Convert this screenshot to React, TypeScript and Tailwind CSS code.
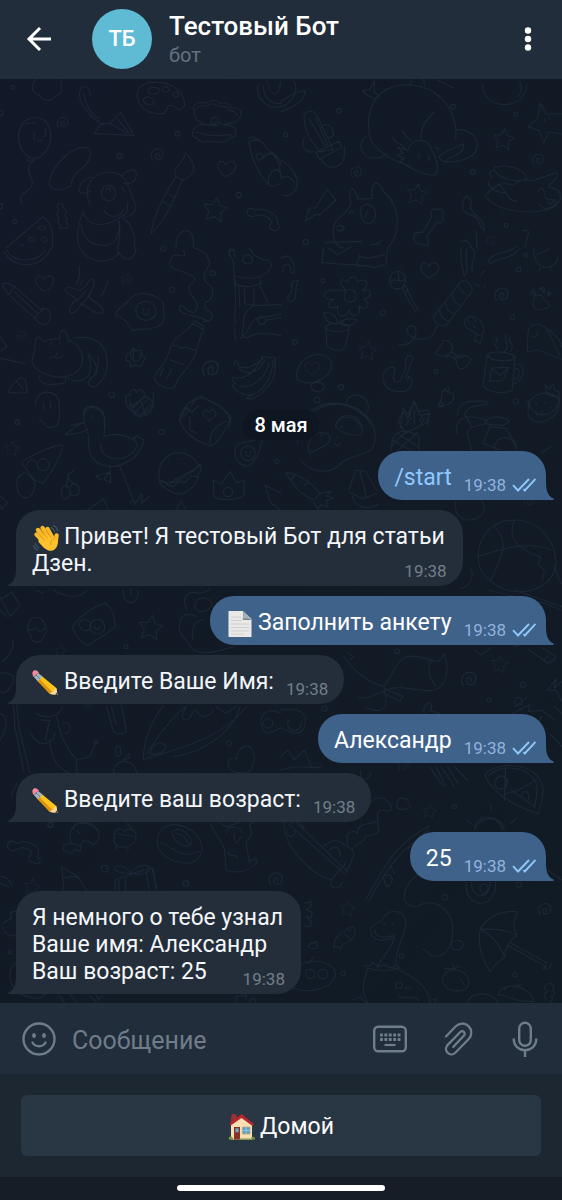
import React from "react";

type Message = {
  id: number;
  from: "user" | "bot";
  lines: string[];
  emoji?: "wave" | "page" | "pencil";
  link?: boolean;
};

const messages: Message[] = [
  { id: 1, from: "user", lines: ["/start"], link: true },
  { id: 2, from: "bot", lines: ["Привет! Я тестовый Бот для статьи", "Дзен."], emoji: "wave" },
  { id: 3, from: "user", lines: ["Заполнить анкету"], emoji: "page" },
  { id: 4, from: "bot", lines: ["Введите Ваше Имя:"], emoji: "pencil" },
  { id: 5, from: "user", lines: ["Александр"] },
  { id: 6, from: "bot", lines: ["Введите ваш возраст:"], emoji: "pencil" },
  { id: 7, from: "user", lines: ["25"] },
  { id: 8, from: "bot", lines: ["Я немного о тебе узнал", "Ваше имя: Александр", "Ваш возраст: 25"] },
];

const emojiClass = "-my-1 mr-1 inline-block size-7 shrink-0 align-middle";

function Wave() {
  return (
    <svg viewBox="0 0 28 28" className={emojiClass} aria-hidden="true">
      <g stroke="#f6b72b" strokeLinecap="round" strokeWidth="4.4">
        <path d="M4.5 10.5 13 19" />
        <path d="M6 6 15 16" />
        <path d="M10.5 4 18 14" />
        <path d="M15.5 5 20 13" />
        <path d="M24.6 11.5 23.5 19" />
      </g>
      <path d="M6.5 13.5 18.5 9 22 15 25.8 16c.4 5-1.300 9.400-5.300 10.500-4.500 1.200-8-1.500-14-8.500z" fill="#fbc02d" />
      <path d="m7.500 11 5 5M9.500 7.500l6 6.500M14 6l5 7.500" stroke="#d98c12" strokeWidth=".9" fill="none" strokeLinecap="round" />
      <path d="M22.500 15c-3 .5-4.500 3-3.500 6" stroke="#df9816" strokeWidth="1" fill="none" />
      <path d="M19 3.500c2 .8 3.200 2.200 3.600 4.300M21.500 1.500c2.400 1 3.800 3 4.200 5.500M3.200 19.500c.4 2 1.600 3.300 3.500 4M1.500 21.500c.7 2.300 2 3.700 4.200 4.600" stroke="#45586a" strokeWidth="1.100" fill="none" strokeLinecap="round" />
    </svg>
  );
}

function Page() {
  return (
    <svg viewBox="0 0 28 28" className={emojiClass} aria-hidden="true">
      <path d="M2.500 1H17l8.500 8v18h-23z" fill="#e9e9e7" />
      <path d="M5 7h10M5 10.500h11M5 14h18M5 17.500h18M5 21h18M5 24h13" stroke="#cfd0d0" strokeWidth="1" />
      <path d="M17 1v9h8.500z" fill="#77818a" />
      <path d="M17 1c.8 3 .5 5-1 8 3-1 6-.8 9.500.8z" fill="#a9b0b3" />
    </svg>
  );
}

function Pencil() {
  return (
    <svg viewBox="0 0 28 28" className={emojiClass} aria-hidden="true">
      <path d="M8.800 6.200 24.300 19 25.500 26 18 25 4.200 10.600z" fill="#fbc31c" />
      <path d="m4.200 10.600 2-1.800L20.500 23l-2.500 2z" fill="#e2930d" />
      <path d="m18 25 2-2.200 1.500-.2 1-2.200 1.800-1.400L25.500 26z" fill="#f6d7a5" />
      <path d="m23 25.600 2-2 .5 2.400z" fill="#343434" />
      <path d="m6.200 3.900 4.300 3.700-4.600 4.700L1.800 8z" fill="#9fb4c0" />
      <path d="M1.900 8.100C-.5 5.500.2 2.500 2 1.600c1.700-.9 4 .2 5 2.500-1.800.5-3.800 2-5.100 4z" fill="#f48a9c" />
      <path d="m4 6 4.300 4.200" stroke="#70838e" strokeWidth="1" />
    </svg>
  );
}

function House() {
  return (
    <svg viewBox="0 0 28 28" className="mr-1 size-7 shrink-0" aria-hidden="true">
      <path d="M3 3.500 4.500 1h3L9 3.500 8 9l-5 2z" fill="#9c2f35" />
      <path d="M3 11 14 2l10 9v15.500H3z" fill="#f8dfb3" />
      <path d="M13.500 1 1.500 10.500l1.200 2L13.500 5l11 8 1.500-2z" fill="#b5262c" />
      <path d="M6 14h6v12.500H6z" fill="#873229" />
      <path d="M7.300 15.300h3.400v4H7.300z" fill="#6fa6bd" />
      <path d="M14.500 14h7.500v7h-7.500z" fill="#58a2cb" stroke="#c4a06f" strokeWidth=".8" />
      <path d="M18.200 14v7M14.500 17.500H22" stroke="#a4d7ec" strokeWidth=".7" />
      <path d="M1 26.500c-1-3 2-4 4-1.500v1.500zM22.500 26.500c0-3 3.500-4 4.500-1v1zM11.500 26.500h12v-1h-12z" fill="#7c9b3d" />
    </svg>
  );
}

function Emoji({ name }: { name: NonNullable<Message["emoji"]> }) {
  if (name === "wave") return <Wave />;
  if (name === "page") return <Page />;
  return <Pencil />;
}

function Ticks() {
  return (
    <svg viewBox="0 0 24 14" className="h-[14px] w-6 shrink-0" fill="none" stroke="#8fc7f8" strokeWidth="1.900" aria-label="Прочитано">
      <path d="m1 7.200 5 5.300L17 1M11.500 11l1.300 1.500L23.500 1" />
    </svg>
  );
}

function Bubble({ message }: { message: Message }) {
  const own = message.from === "user";
  const last = message.lines.length - 1;
  return (
    <li className={own ? "flex justify-end" : "flex justify-start"}>
      <div
        className={
          own
            ? "relative rounded-l-3xl rounded-tr-3xl bg-[#3f628b] pt-[13px] pr-[10px] pb-[9px] pl-4 text-white"
            : "relative rounded-t-3xl rounded-br-3xl bg-[#232e3a] px-4 pt-[13px] pb-[9px] text-[#f4f7fa]"
        }
      >
        {message.lines.map((line, i) => (
          <div key={line} className={i === last ? "flex items-end justify-between gap-3" : "pr-[2px]"}>
            <p className={message.link ? "text-[#8fc9ff]" : ""}>
              {i === 0 && message.emoji && <Emoji name={message.emoji} />}
              {line}
            </p>
            {i === last && (
              <span className={own ? "-mb-[3px] flex items-center gap-[6px] text-[#8fb4dc]" : "-mb-[3px] flex items-center text-[#727e89]"}>
                <time className="text-[17px] leading-[18px]">19:38</time>
                {own && <Ticks />}
              </span>
            )}
          </div>
        ))}
        {own ? (
          <svg viewBox="0 0 9 18" className="absolute bottom-0 left-full -ml-px h-[18px] w-[9px]" fill="#3f628b" aria-hidden="true">
            <path d="M0 0h1c0 9 2 14 7.500 16.600.6.400.4 1.400-.5 1.400H0z" />
          </svg>
        ) : (
          <svg viewBox="0 0 9 18" className="absolute right-full bottom-0 -mr-px h-[18px] w-[9px]" fill="#232e3a" aria-hidden="true">
            <path d="M9 0H8C8 9 6 14 .5 16.600c-.6.400-.4 1.400.5 1.400h8z" />
          </svg>
        )}
      </div>
    </li>
  );
}

const star = "M0-36 11-13 36-10 18 8 23 34 0 22-23 34-18 8-36-10-11-13z";
const heart = "M0 24C-20 12-30-4-22-16-14-28-2-20 0-10 6-24 24-26 29-12 32 2 18 16 0 24z";
const swirl = "M-14 14C-26-4-12-22 6-19 22-14 20 10 4 12-8 12-10-3 0-6 7-6 8 2 3 4";

/* Each sheet covers a 281px-wide tile, drawn at three times its size. */
const sheets: { x: number; y: number; paths: string[]; stars?: number[][]; hearts?: number[][]; swirls?: number[][]; dots?: number[][] }[] = [
  {
    x: 0, y: 78,
    paths: [
      "M103 10C92 25 96 48 118 50c10 22 40 22 48 4 20-2 22-24 14-34 8-8 6-20 0-24M118-4c-14 4-10 12-15 14",
      "M270 52C272 20 240 18 238 45c2 36 30 70 60 88M252 50c4 32 22 58 44 72",
      "M283 167 303 137 330 136 362 103 402 172zM344 112 388 166M330 136l52 30M303 137l10 6",
      "M488 106C440 112 400 76 414 36 430 6 500 4 530 34c24 20 32 50 14 60-12 6-22-16-36-12-12 4-4 22-20 24z",
      "M444 38c0-12 32-14 34-2 0 14-32 18-34 2zM486 33c4-12 22-8 22 2-2 10-22 8-22-2zM518 48c4-10 18-6 18 2 0 8-16 8-18-2zM430 66c6-16 28-10 32 6 0 14-28 10-32-6z",
      "M582 100C572 82 600 66 618 76c16-14 38-8 42 0 22-6 30 4 34 14 26-4 36 12 24 30-10 20-34 14-48 20-10-4-18-18-26 0-26 8-60-8-62-40zM586 96c12-18 26-12 36-12 12-12 28-4 36 2 14-2 26 0 32 12 14 0 22 8 20 16",
      "M634 124a13 13 0 1 1 22 14c-10 10-28 0-22-14zM620 140c-24-8-50 14-40 36 16 4 16 18 34 16 22-6 34 4 50 0 22 2 20-16 40-16 10-20 0-34-32-36M588 164c20-4 28 14 44 6 20 8 40 0 62 0",
      "M60 150c14-40 76-44 88 0 16 42-12 88-46 92-34-4-56-50-42-92zM90 236l-10 12 22 4-4-12M92 250c-20 40 18 50 0 80-20 16-38 24-28 46M102 164v20M136 152c2 14 0 20-4 24M112 184c2 6 8 6 12 2M76 138c10-6 20 2 30-6",
      "M262 210c22 14 4 48-24 68-20 16-20 24-26 46-20 12-58 20-64-6 0-50 72-122 114-108z",
      "M270 380C244 320 286 276 340 284c50 8 44 60 66 92 8 26-18 48-42 34M370 412c18-10 10-26 14-42M366 294c4-8 16-18 22-14 10-14 24 0 20 16-2 18-26 26-36 20M280 300c-20-10-42 18-42 40 10 10 24 4 34-2M305 340c6-30 44-20 42 8-6 36-50 20-42-8zM318 338c4-14 14-10 14 2M366 326l8 16M312 398c22 28 48 18 60-4",
      "M248 400c20 60 90 40 114 16 26 10 46 50 42 95M246 410c-12 30-18 64-8 100M242 440c10 44 28 60 68 62 32 0 50-20 48-74M356 430c6 20 4 60-4 80",
      "M174 380c8-8 20 0 14 8 14 8 12 20 6 26 8 4 10 14 4 18 10 6 6 20-4 18-8 4-16 0-12-6-8-4-10-16-4-22-10-8-8-20-2-26-4-4-6-12-2-16z",
      "M454 466c2-40 40-120 74-170l20 10c-28 60-50 120-94 160zM500 345l26 14M490 372l24 12M528 296c-16-30 28-40 28-72 34 34 36 66-8 82z",
      "M18 510 128 416c30 20 34 60 28 95M112 448c10-8 22-4 26 4-8 8-20 4-26-4zM88 480c8-6 18 0 16 8-8 8-20 0-16-8zM124 480c8-8 18 0 18 8-10 10-20 0-18-8zM60 500l10 2",
      "M746 184c14-18 40 6 60 32 30 20 34 56 37 80M746 190c8 50 30 100 60 130 14 10 20 2 37-4M752 190c20-10 30 0 38 6M790 240c20-30 46-6 53 20M770 230a10 10 0 1 0 16 0c-4-6-14-6-16 0M806 320c-6-40 30-60 37-30",
      "M742 400c2-14 20-8 24-4 40-8 72 20 66 40 16 10-4 28-14 20-14-4-10-16-2-20-4-24-40-28-52-22-14 4-26-4-22-14z",
      "M528 510c-4-60 50-70 52-20v20M775 20c-10 40 30 80 70 64M790 24c0 40 30 60 55 50M800 10c20 60 40 40 42 0",
    ],
    stars: [[646, 394, 1]], hearts: [[678, 272, 1]], swirls: [[188, 136, .9], [472, 232, 1]],
    dots: [[38, 28, 6], [533, 167, 7], [358, 234, 8], [716, 351, 8], [44, 430, 6], [0, 384, 8], [2, 106, 7]],
  },
  {
    x: 281, y: 78,
    paths: [
      "M270 190C250 110 270 30 370 20c100 0 150 70 155 135v30M262 172c-34 14-30 70 20 68 20 2 24-6 34-12M270 190c30 40 70 60 120 76M420 188c-4-40 14-60 40-86M525 155c60-4 80 50 50 76-30 22-90 30-102 6 20-20 40-22 74-40 4 22-14 36-50 46",
      "M380 218c10-40 60-40 70-6 14 24 30 64 10 80-30 0-56-16-76-24l-28-20 16-6-24-10 18-8-16-16 24 6zM414 226v14M444 232v16M336 176c10 30 20 10 36 36M362 160c14 8 16 20 30 30M460 210c14-6 14 6 8 12",
      "M290 60c-12 4-32-6-46-22 10-2 16-4 22-2l14-28M280 10v30l14 16M384 22l14-20M432 20l-6-18M470 6l48 24",
      "M0 100c50-14 70-40 74-62-30-4-60 30-74 30M40 10c14 30-4 60-36 76M605 20c0 80 130 80 132 0M716 10c10 20 4 36-8 46",
      "M70 110c16-20 36-10 46 20l40 84-40 8C90 190 66 150 70 110zM84 122l50 84M104 120l36 80M120 150c0-14 30-14 34 6 8 14 2 24-12 22M70 180c-16 30 16 50 30 40M104 224l70-34 8 18-66 36zM120 244c20 40 70 24 70-10v-28",
      "M0 246c34 20 50 50 48 74-4 30-30 38-46 30M0 300c20-10 34 0 40 14M72 430l14-40 18 0 34-56 26 32-48 46-10-4z",
      "M210 374c-14-60 14-50 20-10 30-4 40 0 44-4C266 300 300 310 306 340c60 50 50 130 14 170M210 376c-10 36-50 40-54 80 0 30 10 50 30 54M238 400c0-30 46-28 46 8 0 40-44 40-46-8zM260 396l-8 24M206 406c4-14 12-8 14 2M168 446c10-6 20-4 22 6-6 6-16 10-22 4M132 494l110-4M270 500c20 0 30-6 34-14",
      "M402 466c10-6 20 0 24-4l26-46c-8-20 8-30 18-20 12-8 24 6 12 20 14 10-4 24-14 16l-32 46c16 16-4 34-16 20-18 4-26-20-18-32z",
      "M556 352l16 16c-20 40 46 50 38 90-20-10-6-40-44-48-30-10-24-40-10-58z",
      "M640 270c30-14 90 0 98 30-20 20-100 0-98-30zM634 300l-10-14 10-10M622 310c-4 10 20 36 50 34M612 352c40-40 60-40 84-30 10-10 30-20 60-14l70-24c14 12-20 32-24 42 14 10 40 0 36 40-20 40-90 40-150 30-40-10-60-20-76-44zM650 320c30 10 20 50 60 50M770 340c10-20 24 0 24 20 10 10 30 0 34 10-10 20-40 30-50 10M800 370l8 8 10-8",
      "M778 76l16 32 49 0M778 76l-8 46-28 24 32 12 14 38 14-34 41 6M790 120v10M806 116v10M584 460c10 30-4 50 8 50M725 458c10 0 16-4 18 6l-12 46M540 490c20-10 30 10 30 20",
    ],
    stars: [[668, 183, .85], [408, 348, .85]], swirls: [[226, 284, .9], [772, 246, .9], [632, 490, .8]],
    dots: [[174, 98, 7], [14, 170, 6], [516, 86, 7], [704, 108, 6], [575, 282, 7], [676, 442, 6], [74, 492, 8]],
  },
  {
    x: 0, y: 248,
    paths: [
      "M12 10c30 60 120 50 140-10M20 6c20 40 90 40 116 0M240 0c30 50 90 50 118 14 24 40 50 10 50-14M354 0v20",
      "M6 112c10-12 20-6 40 6l76 66c20-12 30 10 30 26-8 26-34 24-44 4L26 140zM26 140l18-26M106 212c4-20 20-20 26-30M44 132l70 66",
      "M196 130c-4-14 14-16 40-2 20 0 30-40 44-34 8 16-4 36-16 50 20 20 50 34 46 48-16 16-50-18-66-26-10 20-20 34-34 28-8-14 10-30 18-40zM238 56v30l-10 24M325 100l-20 44M240 110l8-14M230 160l30-34M244 170l30-34",
      "M352 204c-20-10 20-30 36-48 30-40 90-10 102 10 0 30 10 60-14 68-30 16-50 4-76 14-14-6-14-34-48-44zM408 190c-4-40 60-40 60 0 0 36-60 36-60 0zM430 182v6M446 182v6M428 196c8 6 12 6 18 0",
      "M510 50c0-60 60 0 40-44M512 56c30 20 90 20 66 50-40 20 40 60 6 86-20 10-36-34-46-14 0 30 60 20 80 40M580 0c40 10 40 20 50 44-10 30-30 40-10 60 30 20 20 50-4 60-10 30 30 20 18 50-14 10-20 4-24 8",
      "M578 226l6-8 28 16-2 14c-20 34-10 60-40 100-20 30-40 40-44 68-20 16-64-10-64-30 20-30 34-40 44-70 10-50 40-50 72-90zM578 226l30 18M520 294c10-10 20 16 30 4 14-6 20 14 38 6M508 336c20 0 24 16 44 12M480 384l10-22M500 394l14-30",
      "M106 300c-4-40 10-40 26-18 14-8 30-10 46-10 2-34 20-34 26 4 30 10 50 40 42 70-20 70-150 40-150-10zM150 330l16-4 6-14M166 326c10 10 20 0 24-4M150 290l6-8M180 290v-6M224 270c60-10 100 20 98 80 0 40-34 70-48 66-20-10 0-30 14-36 10-30-14-50-24-64M120 382c-8 30 30 30 70 24 10-2 8-14 4-22M204 380c-4 20 30 24 50 12 20-10 20-40 12-70M284 376c10-20 14-28 10-50",
      "M380 320l14-8 4-14 12 10 14-2 2 14 10 10-8 14-6 12-16-6-14 6-2-14-12-6zM392 318c0 30 30 30 30-2M400 310v26M400 308h16",
      "M704 350c-6-20 10-10 14 4 30 20 60-20 70-20l-2-8 40 4v26c0 60-70 110-88 94l20-10c-30 8-60-20-60-28l10-6c-14-6-14-20-8-18 30 8 60-6 88-60M716 360c20 20 60 20 78-24M720 414c40 10 80-30 88-70M758 440c30-10 60-50 62-104",
      "M706 230c-4-50 6-90-4-140 0-40 0-60-16-70l6-20M704 240l2 38M684 12l16-8 6 22M706 84c30 10 50 10 74 2 40-20 40-40 24-50-30 0-50-20-56-36M728 36c0-20 30-20 30-2s-30 18-30 2zM704 90l4 20c30 10 50 6 76-4l-4-14M716 116l4 60M734 124v44l28 2v-50M780 114l24 50M843 170l-60 2c-20-4-40 10-50 30l-6 60 10 8c20-10 40-20 106-8M720 272c30-20 20-40 50-60l73-14M776 210a12 12 0 1 0 20 0c-4-8-16-8-20 0M800 216l43-8",
      "M0 332c30 0 30 10 76 14M0 266l20 30-18 12M26 432c4-20 20-30 34-44l16 8 6 36c-10 6-40 2-56 0zM50 400l20 24M106 470c0-50 70-50 72 0 4 50 0 70-30 68-20-4-14-20-30-24M130 464v20M152 462v20M250 500c0-40 60-30 64 10v30M214 532l40-10",
      "M380 460c-10-20 4-20 10-16-4-20 16-26 20-10 14-20 30 0 20 14M388 470c10 10 20-10 50-24 30 14 24 30 10 50-20 14-40 10-46 0-8-14-14-20-14-26zM400 480l26-28M404 496l40-44M420 504l30-34",
      "M540 520c-4-30 30-60 60-76 20 8 20 14 28 14 30 10 50 30 64 60l-6 22M550 510l40-60M556 480l20 12 20-20",
    ],
    hearts: [[132, 106, 1], [628, 502, .7]], swirls: [[64, 264, .7], [382, 96, .8], [632, 364, 1.300]],
    stars: [],
    dots: [[516, 125, 8], [638, 75, 8], [335, 440, 8], [490, 2, 8], [52, 522, 7]],
  },
  {
    x: 281, y: 248,
    paths: [
      "M128 0l-6 44c40 4 120 6 160 14 30-4 40-14 34-24l4-34M236 20c0 20-16 20-2 36M236 26c30 8 40 0 74-6M142 0l28 20 40-24",
      "M0 30c14-10 40-10 40 44-10 6-16-4-10-10-2-20-30-20-24 8M22 156c-8-20 14-10 10-40-4-14 10-20 20-18-10 14-6 40-10 54-8 10-16 10-20 4z",
      "M190 146a18 18 0 1 1 34 4c-8 20-36 14-34-4zM196 128c-30-30-16-40 4-26 2-20 30-18 30 0 24-14 40 4 14 26 30-10 32 20 4 26 30 14 4 40-14 20 10 30-22 40-30 12-10 30-40 20-34-10-30 10-40-6-10-22-40 4-40-28-4-28zM130 192c30 4 40 20 40 36-30 0-40-14-40-36zM176 226c10-14 34-16 52-10-10 20-40 20-52 10zM134 240c0-20 70-20 72 0-10 14-60 14-72 0zM134 242l4 50c20 20 50 20 56 0l12-54",
      "M326 100c0-40 50-40 48 0-6 30-46 30-48 0zM330 100c14-14 30 10 44-8M350 74c8 10-4 20 10 26M362 120l10-6 10 12-8 8zM372 138l32 54M382 132l30 56",
      "M458 206l80-104c14-10 40 10 34 30l-76 100c-10 6-40-4-38-26zM476 184c0 20 10 30 26 36M494 160c0 20 10 34 28 38M514 134c0 20 10 34 26 40M532 108c4 20 14 30 34 34M466 236c-10 50-60 40-80 26-20-20 0-34 14-26 14 20-4 60-46 54",
      "M550 84l-10-44V0M550 82c20-10-4-60 8-80M574 0c20 20-10 50 0 70M626 46c-16-30 60-30 80-50M628 46c30-20 60-10 90-44M600 80l10-10M586 108l10 8M612 112v6",
      "M550 230c0-40 60-30 58 20l-10 14-40-24zM584 260l-4 20 8-2 10 10 8-26M560 216l6 8M580 212l4 10M576 232l6 6",
      "M760 0c-4 14 0 50 30 58 20 2 40-10 40-30M776 58v10M808 58v8M766 20l40-18M756 160c4-30 30-20 34-4 20 10 20 26 0 26-20 10-36 0-34-22zM750 136l8-10 6 16zM776 122l14-4v16zM800 132l10 4-8 10z",
      "M620 320c10-14 70-8 82 6-10 20-80 14-82-6zM618 322l-12 92c20 24 70 24 88 12l8-96M704 348c40 0 20 60-10 60M704 362c16-4 14 30-4 32M626 400l6-40 50-2-16 40zM632 362l24 20 26-20M650 300c-20-10 10-20-6-30M670 310c20-20 0-30 4-50M688 310c20-20-14-30 0-40",
      "M740 310c0-60-4-80 30-82 40 14 70 50 73 70M740 312l30-6 73 28M752 262c6 14 20 0 18-16M796 240l40 80",
      "M464 316c14-20 20-30 26-40 20 2 30 20 22 34l20 20c20-10 30-10 38 6-10 20-20 30-36 26-8-10-8-20-10-30l-24-10c-10 4-30 2-36-6zM496 328l20-24M520 336l16-16",
      "M306 396c-4-40 40-50 36-24-10 20 0 40 16 26 10-20 24-50 14-60 10-30 30-10 22 0-10 10-6 20-16 40-10 20 10 20 4 8 20 0 14 30-8 44-40 4-60-6-68-34z",
      "M46 380c6-60 80-80 104-40 10 40-40 70-80 64-16-6-26-10-24-24zM90 414c4-16 40-14 40 4-10 20-40 14-40-4z",
      "M472 472c20-30 0-30 20-50l8 12 16 2c10 30-20 40-44 36zM500 434l4-16M358 540l8-60 14 20 18-40 14 30 32-4-4 50M376 530l14-20M400 530v-40M420 530l10-20",
      "M530 500c0-50 50-40 88-40 14 20-60 0-66 40l20 34M616 518c20-20 60-10 70 4l-20 10-50-4zM742 480c0-50 80-60 92-20 4 40-40 70-74 60-20-10-20-30-18-40zM800 440l-8-28 14 10 10-14 6 20 16 4-10 16zM766 466v4M790 460v4M784 490v4M810 476v4M766 498v4",
      "M100 490c40-30 120-40 180 50M196 466c0-40 80-30 64 24M164 540c0-50 70-50 80 0",
    ],
    stars: [[260, 308, .75]], hearts: [[444, 66, 1], [92, 360, .8]], swirls: [[662, 142, 1.100]],
    dots: [[126, 98, 6], [306, 194, 8], [42, 282, 7], [712, 64, 7], [694, 208, 7], [466, 370, 6], [180, 418, 8], [108, 456, 9], [704, 460, 8], [734, 22, 5]],
  },
  {
    x: 0, y: 400,
    paths: [
      "M254 70C240 10 300 10 312 50c4 30 0 50 0 60 30-14 70-4 90 10l6-14 24 14c-10 40-40 70-90 80-60 0-80-30-76-90zM254 68c-20 4-40 20-58 36 30 0 50-6 68-16M274 48v4M302 130c-4 60 90 60 108 10M400 112l14 26M330 200l2 48-20-10 16-20-42 10 20 12M360 200l46 114M390 310c10-14 10-14 16 0l20-30v30M430 306l18-18",
      "M66 190C60 180 170 130 188 136c0 20-30 80-60 114l-24-10zM82 196c0-20 20-20 26-8M112 194a18 18 0 1 0 36 0 18 18 0 1 0-36 0M52 260c-10-30 20-44 30-40 20 20 30 30 20 44 0 40-50 40-50-4z",
      "M184 278c-4-30 30-28 26 4-6 20-26 20-26-4zM210 260c14-20 34 0 26 20-10 14-24 4-26-2M198 262l8-40 14-10M222 252l-20-20 4-10",
      "M476 230c0-90 100-90 120-30l-90 50c-16-4-30-10-30-20zM480 240c20 20 60 10 120-46 10 14 0 20-8 30 10 20-30 60-60 58-30-10-60-30-52-42zM500 254l20 6 16-16 20 4 16-20 20 2M506 186h3M534 176h3M520 204h3M552 192h3",
      "M640 240l24 12 26-38 18 34 24-6v44c-20 16-70 16-90 4zM670 276a14 14 0 1 0 28 0 14 14 0 1 0-28 0",
      "M708 140c10-20 50-10 82-30-10 40-20 80-50 88-30-4-40-30-32-58zM722 160a22 22 0 1 0 44 0 22 22 0 1 0-44 0M738 154v4M752 154v4M738 166c6 4 10 4 14 0",
      "M540 60C560 20 560 0 610-6c20 10 70 30 84 60-20 30-30 70-62 84-30-10-80-30-92-78zM570 50v40l20 10M630 130c0-30 10-50 50-66M376 0c10 60 90 60 84-20M388 0l20 40M420-4l16 46",
      "M264 330l46-34 16 34M530 328l14-26 14 26M796 256l14 50 30 24M796 256l47 24M0 288c10 10 20 14 22 20l-16 20-6-14",
    ],
    stars: [[36, 146, .6]], hearts: [[626, 44, .7]], swirls: [],
    dots: [[484, 96, 8], [830, 184, 6], [52, 68, 6]],
  },
  {
    x: 281, y: 400,
    paths: [
      "M50 130C40 60 100 4 170 10c80 4 140 80 100 140-30 20-80 20-100 50-30 20-80 20-110-20M164 80c10-50 80-30 80 20-20 14-60 0-80-20zM86 160c-14-30 10-70 50-60 20 10 10 30-10 40zM178 80h8M122 104v6M160 130l10 8 10-10M166 108v4",
      "M352 64l14-30 14 20 22-48 14 40 32-6-14 30-60 30zM376 60l14-20M400 70V30M416 64l10-20M332 150c-4-60 40-70 82-40v42M334 120l60 34M350 100l60 40M350 152l60-56M334 136l40-40",
      "M14 218c30 0 80 30 102 62l-16 20c-40-14-60-40-86-82zM40 226l-10 14M70 256l14-10M116 280l34-6-14 14 24 6-24 8 6 20-22-8-10 14-12-22",
      "M204 270l20-60 30 4 34 60M204 276l40 20 46-16M214 290c10 40 60 40 80 20M236 210l20 80",
      "M528 100C520 50 560 40 612 60c20 20-50 10-54 40l14 50M626 80l-20 50 50 20M626 80l50 6 30 50M640 150c0-50 60-50 66 0M740 0c10 60 90 60 96-10M780 160l30-20",
      "M524 306c-10 60 60 70 84 30 4-20 0-30-8-34",
      "M596 500C576 420 630 360 700 360c80 0 130 70 124 140-20 80-120 90-170 60-30-16-50-34-58-60zM640 380c50 50 20 90-10 160M590 470c60-20 150-50 220-20M700 362c-20 50 0 80 80 110l-10 20 20 20-6 30",
      "M540 566c30-10 40-40 30-60M820 500l20 50",
    ],
    stars: [], hearts: [], swirls: [[744, 304, .8]],
    dots: [[480, 14, 7]],
  },
  {
    x: 0, y: 590,
    paths: [
      "M218 110c20-30 60-60 96-70 20 10 30 40 32 70-20 20-60 40-80 56-20 0-44-36-48-56zM270 110a20 20 0 1 0 44 0 20 20 0 1 0-44 0M236 100c14-20 40-10 36 10-4 20-30 14-36-10M284 110a8 8 0 1 0 16 0",
      "M84 120c-4-50 50-50 52-6 10 10 0 14-4 20-4 30-40 30-40 0-8-4-10-8-8-14zM84 122l26-8 10 12 14-10M0 20l30 60 30-34-24-40-30 20M0 60l20 20M160 0c30 20 80 30 100 0M370 0c-4 50 50 50 44 0M392-4v20M110 0l20 10",
      "M560 60c-16-40 0-60 40-50l30-10M584 50c0-40 60-30 50 0-20 20-40 20-50 0zM590 80c-60-30-60 50-40 60l30 40c40 20 80 0 120-10M580 150c-10-40 10-60 30-60",
      "M40 150c0 30-10 50-36 66M0 250c30-10 60 20 30 40-10 20-20 20-30 14M0 370c30 10 20 50 0 80",
      "M38 346c10 30 0 50 10 80l24 120M50 346l8 74 32 130M108 370c30 20 70 10 80-20M120 390l30 2-10 30M94 430c20 50 70 30 70 0M150 390l-14 60M170 380c10 40 10 70 60 130v40M186 400c30-10 30 30 10 30M230 510l40-10 20-50M148 450c10 60 20 80 60 100",
      "M320 350l20 74c10 10 40 10 38-4l-14-76M334 352l14 50M430 508c0-50 20-110 60-160M430 508c70-20 240-60 310-160M440 490C500 400 540 360 560 350M560 350c-14 20-20 40 0 40 20-4 10-30 30-30 10 30 40 20 50 0M450 492c10-40 40-40 50-20-10 14-30 26-50 20zM520 500c80-10 180-70 200-150M648 350l30 20 30-20",
      "M350 500c-8-20 0-40 10-30 4 20 4 30-10 30zM370 510l16-20 4 14zM340 548c0-40 60-50 70 0M686 530c-10-30 20-30 24-20 0-40 40-60 50-20 10 20-4 30-4 44-10 20-60 20-70-4z",
      "M843 370c-40-20-60 0-60 30 10 50 40 20 60 14M790 400a14 14 0 1 0 28 0 14 14 0 1 0-28 0M36 620c0-30 10-20 14-40M220 720c0-30 60-30 70 0M380 700l20 20M660 700l20 10 60-20",
    ],
    stars: [[452, 112, 1], [182, 182, .5]], hearts: [], swirls: [[266, 346, .6]],
    dots: [[378, 170, 6], [288, 456, 6], [686, 460, 8], [150, 704, 7]],
  },
  {
    x: 281, y: 590,
    paths: [
      "M190 200c20 40 80 80 120 90 40-60 40-100 100-90 50 10 60 30 80-10 20 60 0 100-30 110-40 10-100-20-140 0M450 210c-10 20-10 50 16 80M310 296l56 24-10 14-50-26M232 322c20 10 50-10 80-20M250 350c40 20 80 20 60-50M200 190l20 10-16 10",
      "M580 180l20 14 30-20M740 176l60 44c14-4 20-10 26-20l-40-26M790 210l10-14M700 170l30-10M620 0l170 40 50 20M700 0l143 50",
      "M800 300l26-34-6 28 24-20M800 300l26 2 16 30",
      "M696 370l50-26-4 20 40-4 40 30M700 350l40-30M780 380l-14 60M820 350l23 20M806 430l37 40",
      "M0 360c70-10 80 20 70 50-10 30-40 20-70 4M24 390a20 20 0 1 0 36 10M0 500l20-20 20 30 30-30 20 50M430 372c-10-30 30-50 20-10l30 10M0 540c60-20 80 0 120-10",
      "M445 530l40 56M465 530l30 60M480 530l40 60M500 530l30 50M520 530l38 40",
      "M612 556c20-40 160-50 174 40 0 30-10 60-14 76-60-20-140-60-160-116zM624 558c30-40 130-30 144 30 0 30-4 50-8 64M674 532l-4 100M640 580c10-30 30-30 40 0M676 610c30 0 70-30 90-40M722 620c4-30 30-10 20 10M690 600l70 50M640 580a20 20 0 1 0 30-20",
      "M270 640c20-40 70 0 60 20-20 10-30-10-40 10v40M346 650c0-40 40-30 42 0-10 10-30 14-42 0zM580 720c0-50 80-50 90 0M560 690l14 14M630 660v-16M690 700l14-14M240 540c-10 30 20 40 30 10M30 700l20-14 20 30",
    ],
    stars: [[656, 222, .7], [446, 664, .55]], hearts: [], swirls: [[564, 270, 1.200], [368, 528, .8]],
    dots: [[624, 330, 6], [726, 284, 8], [348, 184, 7], [130, 356, 8], [520, 650, 6], [712, 334, 12]],
  },
  {
    x: 0, y: 820,
    paths: [
      "M22 76c4-20 20-12 26-6 40-14 80 10 64 40 20 14 0 30-12 16-20 4-14-20-4-22 0-20-30-24-44-16-16 10-30 2-30-12z",
      "M190 90c0-20 10-20 24-20-20-60 40-80 80-40 10 20 0 36-14 44-20-20-40-10-36 0l-4 20-16-6-10 12zM214 70l30 8M230 30l10 10",
      "M342 46c0-20 20-26 30-12 20-14 40-4 36 20-4 30-60 40-66 10 0-8 4-10 0-18zM350 80l-4 8M384 84v6M350 40c20 10 30 0 50 10",
      "M474 50c10-50 90-50 126 10 20 50-20 80-60 66-40-4-80-40-66-76zM516 36c20-20 50 0 60 30-10 30-60 0-60-30zM480 68c10 10 20 0 30 16 20 0 20 20 40 16 20 10 30-4 48-6M526 40c20 0 30 14 40 30",
      "M630 10c20 40 40 60 44 80l4 60c20 10 60 10 90-20 10-10-4-20-20-4l-10-60c20-20 20-30 10-50l34-26M680 40c0-30 40-20 46-2M700 50l10 20 14-20M684 96c10 20 20 0 30 20M704 40v10",
      "M184 140l50 30 24 40M184 140l8 70M190 170c10 10 30-10 44 4M346 180l60-22 50-14 14 60M346 180v30M356 182l2 28M376 176v34M440 156l8 54M460 150l8 60M390 160c-30 0-60-10-40-22 20-4 30 10 44 20 10-20 50-30 56-10-10 20-40 14-60 12",
      "M0 170c20 0 30 10 36 26M0 190l26 10M10 310c20-14 30-14 20-30 14-10 20-4 26-10M6 320c10 30 30 30 60 26M46 430c-30 20-20 90 40 100 20 8 40 6 50-6M176 525l20 26M212 525l20 26M286 520l10 20 12-14M710 525v26M710 530l30-4-4 12M270 530l20 14",
    ],
    stars: [[96, 200, .65]], hearts: [], swirls: [[828, 180, 1.100]],
    dots: [[314, 146, 10], [558, 190, 8], [30, 396, 6], [152, 14, 8], [758, 544, 8]],
  },
  {
    x: 281, y: 820,
    paths: [
      "M10 20c0 50 70 140 140 160l44-50M10 20C0 0 40 0 50 10l150 146M24 14l170 150M130 76l30-16c30 10 50 20 60 40l-20 50M146 90c20-20 36 0 30 20M150 180c-10 30 30 30 34 6M200 70c-10-40 20-40 30-30 0-40 40-20 60-40M212 90c10-20 40-20 40-40 20-4 50-10 40-30M20 30a12 12 0 1 0 20 0",
      "M254 238c60-100 80-160 190-220M264 244c60-120 110-160 180-216M306 170c30-20 40 20 10 30zM330 140l10 20M380 90l8-14",
      "M420 158c-60 30-70 110-10 100 60-30 100 20 106 60 0 60-20 90-50 90-30 4-20-20-40-20M426 160l40 20M510 374c4-20 40-16 36 4-10 20-36 14-36-4z",
      "M556 186c-10 80 90 90 88 0M572 186c-4 54 60 54 54 0M600 196a12 14 0 1 0 20 14c4-14-10-24-20-14",
      "M268 330c0-20 30-20 34-30 30-50 80-20 72 20-10 40-30 70-30 110M268 330c0 30 40 40 72 20 0 30-40 60-52 94M282 336c10 20 40 20 60 6M308 308l4 10M336 306v8M278 334l6-6M244 438l24 0 6-12 20 14 14-6 24 10 16-10 10 14M260 444c-14 50-20 70 0 105M340 444c50 20 110 60 106 106M260 444c30 10 60 10 90 0M344 496a10 10 0 1 0 20 0 10 10 0 1 0-20 0M374 500a7 7 0 1 0 14 0M354 530c30 10 50-10 60 14M214 540l24-10 20 20M450 540l20-6-10 14",
      "M598 328c20-40 70-60 114-52-14 20-20 40-4 70-30-16-70-20-110-18zM598 328c-10 50 4 90 30 128 10-20 20-30 44-44M598 328c40 20 60 50 74 84M672 412c0-30 10-50 36-66M680 376l116 64-10 4c10 10 26 0 24-14M684 366l116 64",
      "M484 480c10-50 80-30 80 4 0 40-70 40-80-4zM490 446l30 0-8-16M520 448l10-10 14 4M540 480l10 16",
      "M560 548c10-40 80-30 90 0M652 520c20-40 100-20 106 24M650 524c40 4 50 24 106 20M670 510l10-10M700 500l20-6M790 500c10-20 40-4 24 10 14 8 4 20-4 20 8 10 4 14-4 20M790 500c0 10 4 10 10 14-14 8-8 20-4 24",
      "M160 370c0-20 20-30 50-50 16 0 14 20 10 26-10 20-24 24-34 26l-8 16-6-8-14 2zM190 340l14 14M208 330v4M70 250l20-6v18l-16 6 20 10-4 16-14-4 16 16-4 14-20-2",
      "M60 432c50-20 100 0 104 30-10 50-90 60-130 40M74 462a14 14 0 1 0 28 0 14 14 0 1 0-28 0M112 462a14 14 0 1 0 28 0 14 14 0 1 0-28 0M80 430l20-20M80 380c10-14 20-10 28-16v20c-10 6-20 0-28-4M580 30c20-50 80-40 84 0M800 150l43 30",
    ],
    stars: [[200, 266, .6]], hearts: [], swirls: [[792, 270, 1]],
    dots: [[492, 232, 8], [362, 408, 7], [186, 460, 6], [702, 464, 6], [714, 194, 8]],
  },
];

function Wallpaper() {
  return (
    <svg
      viewBox="0 79 562 924"
      preserveAspectRatio="xMidYMax slice"
      className="absolute inset-0 size-full text-[#1d2635]"
      fill="none"
      stroke="currentColor"
      strokeWidth="3.500"
      strokeLinejoin="round"
      strokeLinecap="round"
      aria-hidden="true"
    >
      {sheets.map((sheet) => (
        <g key={`${sheet.x}-${sheet.y}`} transform={`translate(${sheet.x} ${sheet.y}) scale(0.3333)`}>
          {sheet.paths.map((d) => (
            <path key={d} d={d} />
          ))}
          {sheet.stars?.map(([x, y, s]) => <path key={`s${x}-${y}`} d={star} transform={`translate(${x} ${y}) rotate(8) scale(${s})`} />)}
          {sheet.hearts?.map(([x, y, s]) => <path key={`h${x}-${y}`} d={heart} transform={`translate(${x} ${y}) scale(${s})`} />)}
          {sheet.swirls?.map(([x, y, s]) => <path key={`w${x}-${y}`} d={swirl} transform={`translate(${x} ${y}) scale(${s})`} />)}
          {sheet.dots?.map(([x, y, r]) => <circle key={`d${x}-${y}`} cx={x} cy={y} r={r} />)}
        </g>
      ))}
    </svg>
  );
}

export default function App() {
  return (
    <div className="flex min-h-screen flex-col bg-[#111925] font-['Roboto','Noto_Sans',sans-serif] text-[23px] leading-[27px]">
      <header className="flex h-[79px] shrink-0 items-center bg-[#212d3a] pr-5 pb-[2px] pl-6 text-white">
        <button type="button" aria-label="Назад" className="flex size-8 items-center justify-center">
          <svg viewBox="0 0 32 32" className="size-8" fill="none" stroke="currentColor" strokeWidth="3" aria-hidden="true">
            <path d="M27 16H6M16 5 5 16l11 11" />
          </svg>
        </button>
        <div className="ml-9 flex size-[60px] shrink-0 items-center justify-center rounded-full bg-[#5fbad3] text-[22px] font-medium">ТБ</div>
        <div className="ml-[17px] min-w-0 flex-1">
          <h1 className="truncate text-[26px] leading-[32px] font-medium">Тестовый Бот</h1>
          <p className="text-[20px] leading-[26px] text-[#647282]">бот</p>
        </div>
        <button type="button" aria-label="Меню" className="flex h-8 w-7 items-center justify-center">
          <svg viewBox="0 0 8 24" className="h-6 w-2" fill="currentColor" aria-hidden="true">
            <circle cx="4" cy="3.500" r="3.200" />
            <circle cx="4" cy="12" r="3.200" />
            <circle cx="4" cy="20.500" r="3.200" />
          </svg>
        </button>
      </header>

      <main className="relative flex flex-1 flex-col justify-end overflow-hidden bg-linear-to-br from-[#121827] to-[#111b24] pb-[9px]">
        <Wallpaper />
        <div className="relative">
          <p className="mx-auto mb-[11px] w-fit rounded-full bg-[#0e1622] px-[11px] py-[2px] text-[20px] leading-[26px] font-medium text-white">8 мая</p>
          <ul className="flex flex-col gap-[10px] px-4">
            {messages.map((message) => (
              <Bubble key={message.id} message={message} />
            ))}
          </ul>
        </div>
      </main>

      <form className="flex h-[71px] shrink-0 items-center bg-[#212d3a] pr-5 pl-[21px] text-[#6f7c8a]" onSubmit={(e) => e.preventDefault()}>
        <button type="button" aria-label="Эмодзи">
          <svg viewBox="0 0 36 36" className="size-9" fill="none" stroke="currentColor" strokeWidth="2.400" strokeLinecap="round" aria-hidden="true">
            <circle cx="18" cy="18" r="15.500" />
            <path d="M11.500 21.500c3 5 10 5 13 0" />
            <ellipse cx="13" cy="14.500" rx="1.900" ry="2.500" fill="currentColor" stroke="none" />
            <ellipse cx="23" cy="14.500" rx="1.900" ry="2.500" fill="currentColor" stroke="none" />
          </svg>
        </button>
        <input
          type="text"
          aria-label="Сообщение"
          placeholder="Сообщение"
          className="ml-[15px] min-w-0 flex-1 bg-transparent pt-1 text-[25px] leading-[32px] text-white outline-none placeholder:text-[#6f7c8a]"
        />
        <div className="flex items-center gap-8">
          <button type="button" aria-label="Клавиатура">
            <svg viewBox="0 0 36 36" className="size-9" fill="none" stroke="currentColor" strokeWidth="2.400" aria-hidden="true">
              <rect x="2.200" y="5.700" width="31.600" height="24.600" rx="4" />
              <path d="M8 14h20.500M8 18.500h20.500" strokeWidth="2.800" strokeDasharray="2.900 1.500" />
              <path d="M12.500 24h11" strokeWidth="2.200" />
            </svg>
          </button>
          <button type="button" aria-label="Прикрепить файл">
            <svg viewBox="0 0 36 36" className="size-9" fill="none" stroke="currentColor" strokeWidth="2.300" strokeLinecap="round" aria-hidden="true">
              <path d="M6 15.500 15.500 5.500c4-4 9.500-3.800 13-.4 3.600 3.500 3.800 9.200 0 13.200L15.300 31.700c-2.300 2.300-5.600 2.200-7.700.1-2.200-2.100-2.300-5.400-.1-7.700L20.300 11c1-1 2.600-1 3.600-.1s1.100 2.500.1 3.600L13.200 26" />
            </svg>
          </button>
          <button type="button" aria-label="Голосовое сообщение">
            <svg viewBox="0 0 34 36" className="h-9 w-[34px]" fill="none" stroke="currentColor" strokeWidth="2.400" aria-hidden="true">
              <rect x="11.200" y="1.800" width="11.600" height="23" rx="5.800" />
              <path d="M5.700 17.500c0 7 4.800 11.800 11.300 11.800s11.300-4.800 11.300-11.800M17 29.500V36" />
            </svg>
          </button>
        </div>
      </form>

      <section aria-label="Клавиатура бота" className="shrink-0 bg-[#1c2732] px-[21px] pt-[21px] pb-[21px]">
        <button type="button" className="flex h-[61px] w-full items-center justify-center rounded-md bg-[#293644] pt-[2px] text-white">
          <House />
          <span>Домой</span>
        </button>
      </section>

      <footer className="flex h-[23px] shrink-0 items-center justify-center bg-[#161d27] pb-[1px]">
        <div className="h-[6px] w-[37%] rounded-full bg-white" />
      </footer>
    </div>
  );
}
